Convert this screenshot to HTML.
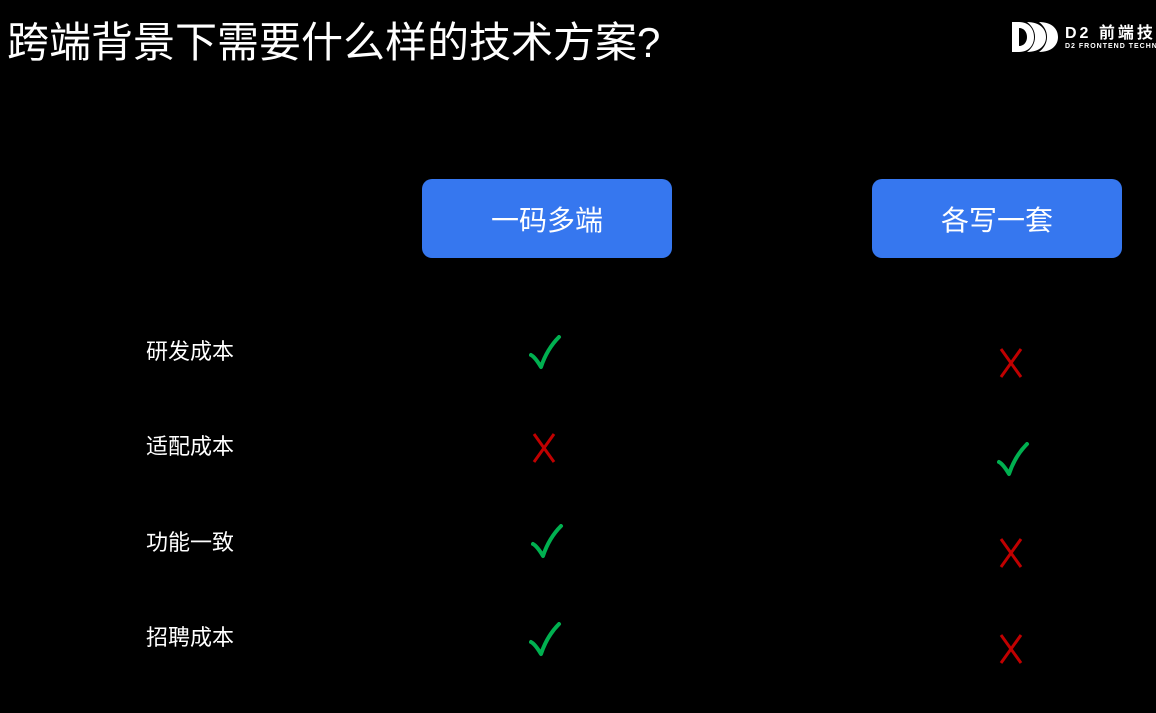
<!DOCTYPE html>
<html><head><meta charset="utf-8"><style>
body{margin:0;width:1156px;height:713px;background:#000;overflow:hidden;position:relative;font-family:"Liberation Sans","Noto Sans CJK SC",sans-serif;color:#fff}
.t{position:absolute;left:7px;top:17px;font-size:42px;line-height:52px;white-space:nowrap}
.btn{position:absolute;top:179px;width:250px;height:79px;background:#3677ef;border-radius:10px;font-size:28px;display:flex;align-items:center;justify-content:center}
.lb{position:absolute;left:146px;font-size:22px;line-height:28px}
svg{position:absolute}
.logo{position:absolute;left:1065px;top:19px;font-size:16px;font-weight:bold;letter-spacing:3px;white-space:nowrap}
.logo2{position:absolute;left:1065px;top:43px;font-size:7px;font-weight:bold;letter-spacing:1px;white-space:nowrap}
</style></head><body>
<div class="t">跨端背景下需要什么样的技术方案?</div>
<svg style="left:1012px;top:21px" width="46" height="32" viewBox="0 0 46 32"><path d="M0 1h7v30H0z M7 1c10 0 15 7 15 15s-5 15-15 15v-6c5 0 8-4 8-9S12 7 7 7z M15 1c13 0 19 7 19 15s-6 15-19 15c4-3 8-8 8-15S19 4 15 1z M27 1c13 0 19 7 19 15s-6 15-19 15c4-3 8-8 8-15S31 4 27 1z" fill="#fff"/></svg>
<div class="logo">D2 前端技</div>
<div class="logo2">D2 FRONTEND TECHN</div>
<div class="btn" style="left:422px">一码多端</div>
<div class="btn" style="left:872px">各写一套</div>
<div class="lb" style="top:338px">研发成本</div>
<div class="lb" style="top:433px">适配成本</div>
<div class="lb" style="top:529px">功能一致</div>
<div class="lb" style="top:624px">招聘成本</div>
<svg width="0" height="0"><defs>
<g id="ck"><path d="M2 20 Q6 22 12 32 Q18 14 30 2" fill="none" stroke="#00b050" stroke-width="4" stroke-linecap="round" stroke-linejoin="round"/></g>
<g id="x"><path d="M3 2 L23 30 M23 2 L3 30" stroke="#c00000" stroke-width="3"/></g>
</defs></svg>
<svg style="left:529px;top:335px" width="34" height="36"><use href="#ck"/></svg>
<svg style="left:997px;top:442px" width="34" height="36"><use href="#ck"/></svg>
<svg style="left:531px;top:524px" width="34" height="36"><use href="#ck"/></svg>
<svg style="left:529px;top:622px" width="34" height="36"><use href="#ck"/></svg>
<svg style="left:531px;top:432px" width="28" height="34"><use href="#x"/></svg>
<svg style="left:998px;top:347px" width="28" height="34"><use href="#x"/></svg>
<svg style="left:998px;top:537px" width="28" height="34"><use href="#x"/></svg>
<svg style="left:998px;top:633px" width="28" height="34"><use href="#x"/></svg>
</body></html>
